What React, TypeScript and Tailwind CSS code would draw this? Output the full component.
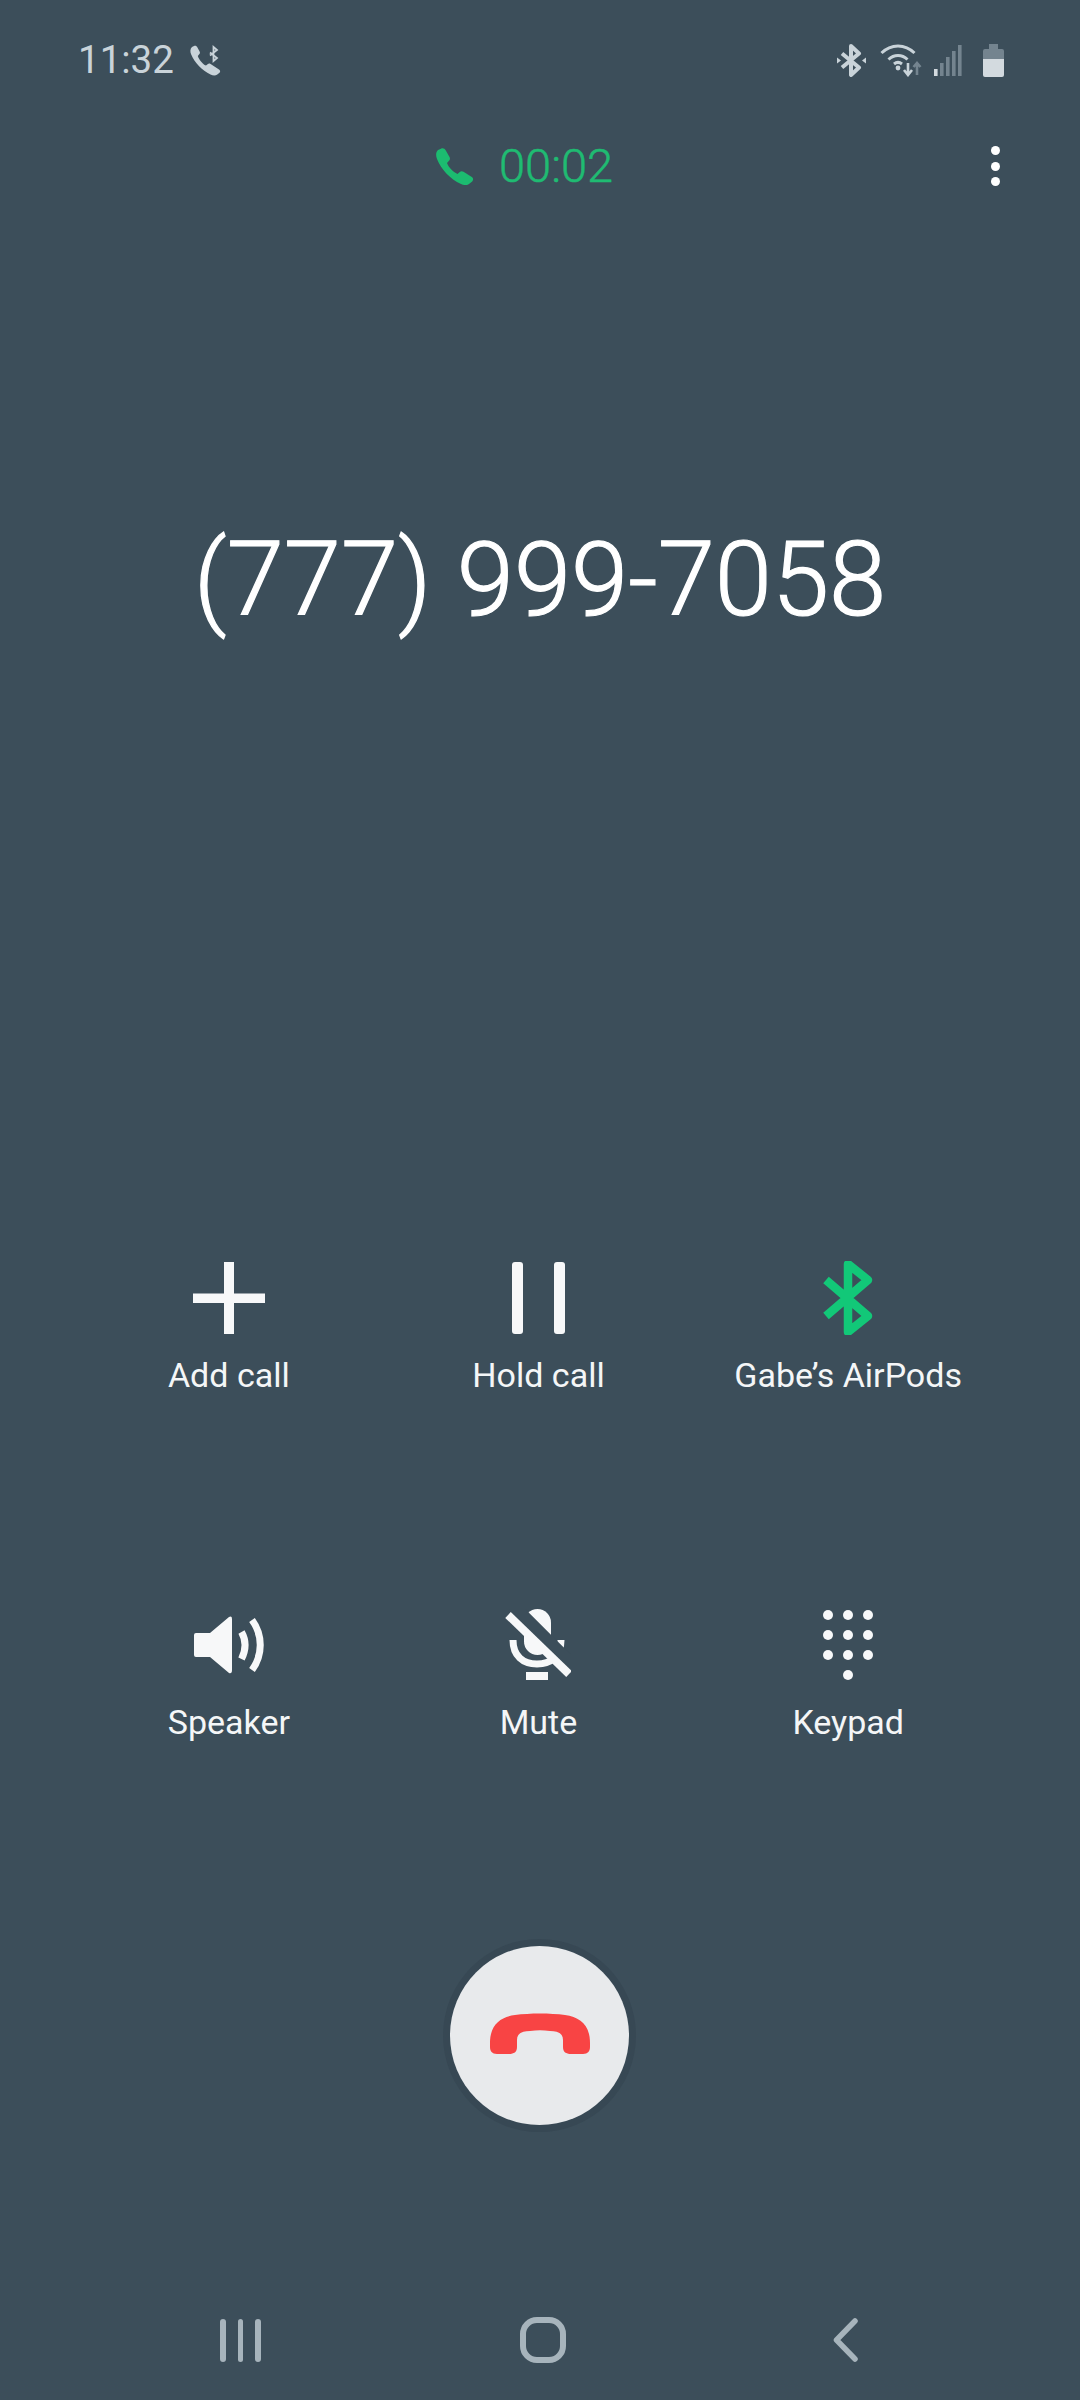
const white = "#f7f8f9";

function CallBtIcon() {
  return (
    <svg width="32" height="31" viewBox="0 0 32 31" fill="none">
      <path d="M4 1 C5.5 0.5 6.5 1 7.3 2.3 L9.6 6.6 C10.2 7.8 10 8.8 9 9.6 L7.8 10.9 C9 14.5 12.5 18.8 16 20.6 L17.6 19.2 C18.6 18.4 19.6 18.4 20.6 19 L29 24.6 C30.3 25.5 30.5 26.8 29.5 27.8 L27.3 29.6 C25.5 31 23 30.8 20.5 29.6 C12 25.6 4.5 17.5 1.2 9.6 C0 6.6 0 4 2 2 Z" fill="#c9d3d9" />
      <path d="M20 7.5 L27 13 L23.5 16 L23.5 2 L27 5 L20 10.5" stroke="#c9d3d9" strokeWidth="1.8" />
    </svg>
  );
}

function StatusIcons() {
  return (
    <div className="flex items-center">
      <svg width="29" height="33" viewBox="0 0 29 33" fill="none">
        <path d="M5 9.5 L22 23.5 L14 31 L14 2 L22 9.5 L5 23.5" stroke="#c9d3d9" strokeWidth="4" strokeLinejoin="round" />
        <path d="M0 13.5 L4 16.5 L0 19.5 Z M29 13.5 L25 16.5 L29 19.5 Z" fill="#c9d3d9" />
      </svg>
      <svg className="ml-[14px]" width="42" height="33" viewBox="0 0 42 33" fill="none">
        <path d="M1.5 9 C11 -0.5 25 -0.5 34.5 9" stroke="#c9d3d9" strokeWidth="3" />
        <path d="M8.5 15.5 C14 10.2 22 10.2 27.5 15.5" stroke="#c9d3d9" strokeWidth="3" />
        <path d="M14 20 C16.5 18 19.5 18 22 20" stroke="#c9d3d9" strokeWidth="3" />
        <circle cx="18" cy="24" r="2.4" fill="#c9d3d9" />
        <path d="M28 19 V29 M24 26 L28 31 L32 26" stroke="#c9d3d9" strokeWidth="2.6" />
        <path d="M37 31 V20 M33.5 23 L37 19 L40.5 23" stroke="#74848f" strokeWidth="2.6" />
      </svg>
      <svg className="ml-[12px]" width="28" height="31" viewBox="0 0 28 31">
        <rect x="0" y="24" width="3.6" height="7" fill="#d3dadf" />
        <rect x="6" y="18" width="3.6" height="13" fill="#74848f" />
        <rect x="12" y="12" width="3.6" height="19" fill="#74848f" />
        <rect x="18" y="6" width="3.6" height="25" fill="#74848f" />
        <rect x="24" y="0" width="3.6" height="31" fill="#74848f" />
      </svg>
      <svg className="ml-[21px]" width="21" height="33" viewBox="0 0 21 33">
        <path d="M6 0 H15 V5 H19 Q21 5 21 7 V15 H0 V7 Q0 5 2 5 H6 Z" fill="#74848f" />
        <path d="M0 15 H21 V31 Q21 33 19 33 H2 Q0 33 0 31 Z" fill="#d3dadf" />
      </svg>
    </div>
  );
}

function GreenPhone() {
  return (
    <svg width="38" height="37" viewBox="0 0 38 37">
      <path d="M5 0.7 C7 -0.2 8.6 0.6 9.8 2.6 L13.5 9 C14.3 10.5 14 12 12.8 13 L11 15 C12.5 19 17 24 21.5 26 L23.5 24.2 C24.8 23 26.3 23 27.5 23.8 L35.8 29 C37.4 30 37.6 32 36.2 33.5 L33 36 C31 37.5 28 37.3 25 36 C14 31 5 21 1 11 C-0.5 7 0 4 2 2 Z" fill="#1cbb70" />
    </svg>
  );
}

function PlusIcon() {
  return (
    <svg width="72" height="72" viewBox="0 0 72 72">
      <rect x="31" y="0" width="10" height="72" fill={white} />
      <rect x="0" y="31.5" width="72" height="9.5" fill={white} />
    </svg>
  );
}

function PauseIcon() {
  return (
    <div className="flex gap-[31px]">
      <div className="h-[72px] w-[11px] rounded-[3px] bg-[#f7f8f9]" />
      <div className="h-[72px] w-[11px] rounded-[3px] bg-[#f7f8f9]" />
    </div>
  );
}

function BluetoothIcon() {
  return (
    <svg width="50" height="74" viewBox="0 0 50 74" fill="none">
      <path d="M3 19 L45 55 L25 71 L25 3 L45 19 L3 55" stroke="#12c878" strokeWidth="8.5" strokeLinejoin="round" />
    </svg>
  );
}

function SpeakerIcon() {
  return (
    <svg className="ml-[2px]" width="72" height="58" viewBox="0 0 72 58" fill="none">
      <path d="M2 17 H16 L35 1 Q38 -0.5 38 3 V54 Q38 58 35 57 L16 41 H2 Q0 41 0 39 V19 Q0 17 2 17 Z" fill={white} />
      <path d="M47.5 16 C52 24 52 34 47.5 43" stroke={white} strokeWidth="7" />
      <path d="M58 4 C69 19 69 39 58 54" stroke={white} strokeWidth="7" />
    </svg>
  );
}

function MuteIcon() {
  return (
    <svg width="66" height="72" viewBox="0 0 66 72" fill="none">
      <rect x="19" y="0" width="27" height="46" rx="13.5" fill={white} />
      <path d="M8 31 C8 47 18 55 32 55 C46 55 56 47 56 31" stroke={white} strokeWidth="7" />
      <rect x="21" y="63" width="22" height="8" fill={white} />
      <path d="M8 -3 L75 64" stroke="#3c4e5a" strokeWidth="13" />
      <path d="M3 6 L64 65" stroke={white} strokeWidth="8" />
    </svg>
  );
}

function KeypadIcon() {
  const dots = [0, 1, 2, 3, 4, 5, 6, 7, 8];
  return (
    <div className="grid w-[50px] grid-cols-3 gap-x-[10px] gap-y-[10.3px]">
      {dots.map((d) => (
        <div key={d} className="size-[10px] rounded-full bg-[#f7f8f9]" />
      ))}
      <div className="col-start-2 size-[10px] rounded-full bg-[#f7f8f9]" />
    </div>
  );
}

function ControlButton({ icon, label }: { icon: React.ReactNode; label: string }) {
  return (
    <div className="flex flex-col items-center">
      <div className="flex h-[72px] items-center justify-center">{icon}</div>
      <span className="mt-[21px] h-[40px] whitespace-nowrap text-[34px] leading-[40px] text-[#f4f6f7]">
        {label}
      </span>
    </div>
  );
}

export default function App() {
  return (
    <div className="flex h-[2400px] w-[1080px] flex-col overflow-hidden bg-[#3c4e5a] font-['Roboto',sans-serif]">
      {/* status bar */}
      <div className="mt-[30px] flex h-[60px] items-center pl-[78px] pr-[76px]">
        <span className="text-[38.5px] leading-[60px] text-[#c9d3d9]">11:32</span>
        <div className="ml-[16px]">
          <CallBtIcon />
        </div>
        <div className="ml-auto">
          <StatusIcons />
        </div>
      </div>

      {/* timer */}
      <div className="mt-[46px] flex h-[60px] items-center pl-[436px] pr-[80px]">
        <GreenPhone />
        <span className="ml-[25px] text-[47px] font-light leading-[60px] text-[#1fbb72] [-webkit-text-stroke:0.5px_#1fbb72]">00:02</span>
        <div className="ml-auto flex flex-col gap-[6.5px]">
          <div className="size-[9px] rounded-full bg-white" />
          <div className="size-[9px] rounded-full bg-white" />
          <div className="size-[9px] rounded-full bg-white" />
        </div>
      </div>

      {/* number */}
      <div className="mt-[324px] flex h-[120px] justify-center">
        <span className="text-[103px] font-light leading-[120px] text-white [-webkit-text-stroke:1.2px_white]">(777) 999-7058</span>
      </div>

      {/* controls */}
      <div className="mt-[622px] grid grid-cols-3 gap-y-[214px] pl-[74px] pr-[77px]">
        <ControlButton icon={<PlusIcon />} label="Add call" />
        <ControlButton icon={<PauseIcon />} label="Hold call" />
        <ControlButton icon={<BluetoothIcon />} label="Gabe’s AirPods" />
        <ControlButton icon={<SpeakerIcon />} label="Speaker" />
        <ControlButton icon={<MuteIcon />} label="Mute" />
        <ControlButton icon={<KeypadIcon />} label="Keypad" />
      </div>

      {/* end call */}
      <div className="mt-[204px] flex justify-center pr-[1px]">
        <div className="flex size-[179px] items-center justify-center rounded-full bg-[#e8eaec] shadow-[0_0_0_7px_#374854]">
          <svg className="mb-[4px]" width="100" height="41" viewBox="0 0 100 41">
            <path d="M0 30 C0 12 10 4 25 2 C40 0 60 0 75 2 C90 4 100 12 100 30 L100 34 C100 38 98 41 93 41 L81 41 C76 41 73 39 73 34 L73 27 C73 21 69 18 60 18 C53 17 47 17 40 18 C31 18 27 21 27 27 L27 34 C27 39 24 41 19 41 L7 41 C2 41 0 38 0 34 Z" fill="#f84444" />
          </svg>
        </div>
      </div>

      {/* nav bar */}
      <div className="mt-[192px] flex h-[46px] items-center pl-[220px] pr-[222px]">
        <div className="flex gap-[12px]">
          <div className="h-[43px] w-[5.5px] rounded-full bg-[#a7b4bc]" />
          <div className="h-[43px] w-[5.5px] rounded-full bg-[#a7b4bc]" />
          <div className="h-[43px] w-[5.5px] rounded-full bg-[#a7b4bc]" />
        </div>
        <div className="ml-[259px] h-[46px] w-[46px] rounded-[17px] border-[6px] border-[#a7b4bc]" />
        <svg className="ml-auto" width="25" height="44" viewBox="0 0 25 44" fill="none">
          <path d="M22 3 L3.5 22 L22 41" stroke="#a7b4bc" strokeWidth="5.5" strokeLinecap="round" strokeLinejoin="round" />
        </svg>
      </div>
    </div>
  );
}
